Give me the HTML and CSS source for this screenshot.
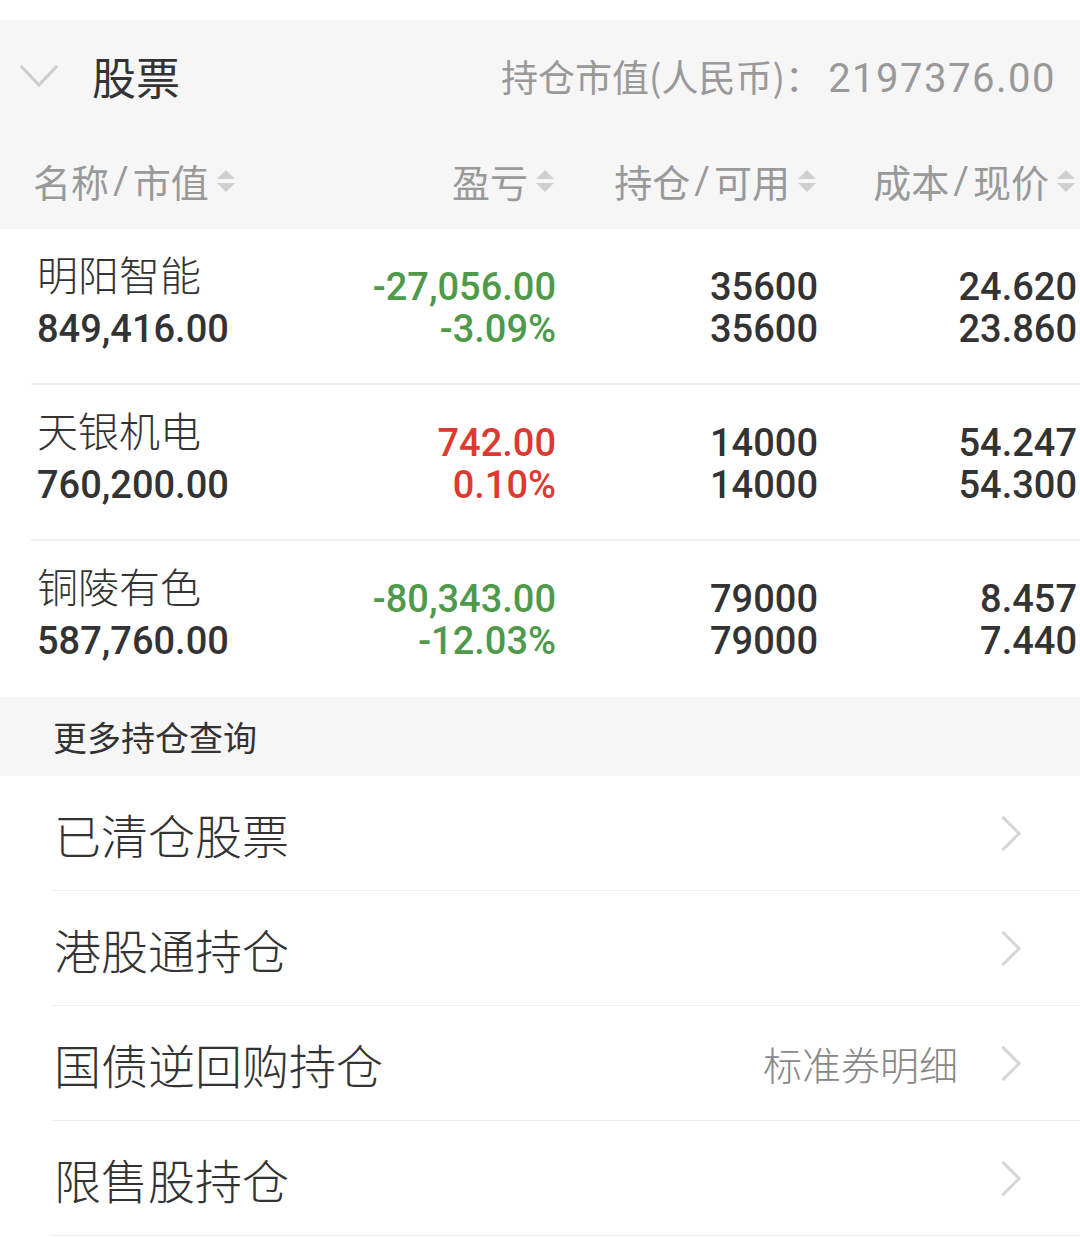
FILE: index.html
```html
<!DOCTYPE html>
<html lang="zh-CN">
<head>
    <meta charset="UTF-8">
    <title>持仓</title>
    <link rel="stylesheet" href="styles.css">
</head>
<body>
<div class="page">
    <div class="stock-head">
        <div class="title-row">
            <svg class="fold" width="40" height="24" viewBox="0 0 40 24">
                <polyline points="2,2 20,21 38,2" fill="none" stroke="#cccccc" stroke-width="3"/>
            </svg>
            <span class="title">股票</span>
            <span class="total">持仓市值(人民币)：<span class="num">2197376.00</span></span>
        </div>
        <div class="cols">
            <div class="col col-name">名称<i>/</i>市值<svg class="sort" width="18" height="24" viewBox="0 0 18 24"><polygon points="0,10 9,1 18,10" fill="#cfcfcf"/><polygon points="0,14 9,23 18,14" fill="#cfcfcf"/></svg></div>
            <div class="col">盈亏<svg class="sort" width="18" height="24" viewBox="0 0 18 24"><polygon points="0,10 9,1 18,10" fill="#cfcfcf"/><polygon points="0,14 9,23 18,14" fill="#cfcfcf"/></svg></div>
            <div class="col">持仓<i>/</i>可用<svg class="sort" width="18" height="24" viewBox="0 0 18 24"><polygon points="0,10 9,1 18,10" fill="#cfcfcf"/><polygon points="0,14 9,23 18,14" fill="#cfcfcf"/></svg></div>
            <div class="col">成本<i>/</i>现价<svg class="sort" width="18" height="24" viewBox="0 0 18 24"><polygon points="0,10 9,1 18,10" fill="#cfcfcf"/><polygon points="0,14 9,23 18,14" fill="#cfcfcf"/></svg></div>
        </div>
    </div>

    <ul class="holdings">
        <li class="row">
            <div class="name-cell">
                <div class="name">明阳智能</div>
                <div class="num">849,416.00</div>
            </div>
            <div class="cell num down">-27,056.00<br>-3.09%</div>
            <div class="cell num">35600<br>35600</div>
            <div class="cell num">24.620<br>23.860</div>
        </li>
        <li class="row">
            <div class="name-cell">
                <div class="name">天银机电</div>
                <div class="num">760,200.00</div>
            </div>
            <div class="cell num up">742.00<br>0.10%</div>
            <div class="cell num">14000<br>14000</div>
            <div class="cell num">54.247<br>54.300</div>
        </li>
        <li class="row">
            <div class="name-cell">
                <div class="name">铜陵有色</div>
                <div class="num">587,760.00</div>
            </div>
            <div class="cell num down">-80,343.00<br>-12.03%</div>
            <div class="cell num">79000<br>79000</div>
            <div class="cell num">8.457<br>7.440</div>
        </li>
    </ul>

    <div class="more-head">更多持仓查询</div>

    <ul class="menu">
        <li class="item"><span class="label">已清仓股票</span><span class="arrow"></span></li>
        <li class="item"><span class="label">港股通持仓</span><span class="arrow"></span></li>
        <li class="item"><span class="label">国债逆回购持仓</span><span class="extra">标准券明细</span><span class="arrow"></span></li>
        <li class="item"><span class="label">限售股持仓</span><span class="arrow"></span></li>
    </ul>
</div>
</body>
</html>
```

FILE: styles.css
```css
*{
    margin: 0;
    padding: 0;
}

body{
    background-color: #ffffff;
    font-family: "Noto Sans CJK SC", sans-serif;
    color: #333333;
}

.page{
    width: 1080px;
    padding-top: 20px;
    overflow: hidden;
}

.num{
    font-family: Roboto, "Noto Sans CJK SC", sans-serif;
}

/* 股票 标题 + 表头 */
.stock-head{
    background-color: #f6f6f6;
}

.title-row{
    height: 112px;
    display: flex;
    align-items: center;
    padding: 0 24px 0 19px;
}

.fold{
    display: block;
    margin-right: 33px;
}

.title{
    font-size: 44px;
    color: #333333;
}

.total{
    margin-left: auto;
    font-size: 37px;
    color: #999999;
}

.total .num{
    font-size: 40px;
    letter-spacing: 1.5px;
    margin-left: 6px;
}

.cols{
    height: 97px;
    display: grid;
    grid-template-columns: 1fr 240px 262px 259px;
    align-items: center;
    padding: 0 5px 0 33px;
    font-size: 38px;
    color: #999999;
}

.col{
    display: flex;
    align-items: center;
    justify-content: flex-end;
}

.col-name{
    justify-content: flex-start;
}

.col i{
    font-style: normal;
    font-family: Roboto, sans-serif;
    margin: 0 4px;
}

.sort{
    display: block;
    margin-left: 8px;
}

/* 持仓列表 */
.holdings{
    list-style: none;
}

.row{
    height: 156px;
    box-sizing: border-box;
    margin-left: 31px;
    padding: 19px 3px 0 6px;
    border-bottom: 2px solid #f1f1f1;
    display: grid;
    grid-template-columns: 1fr 240px 262px 259px;
    align-items: start;
}

.row:last-child{
    border-bottom: none;
}

.name{
    font-size: 41px;
    line-height: 50px;
    font-weight: 300;
}

.name-cell .num{
    font-size: 38px;
    line-height: 42px;
    margin-top: 10px;
    font-weight: 500;
}

.cell{
    text-align: right;
    font-size: 38px;
    line-height: 42px;
    padding-top: 18px;
    font-weight: 500;
}

.down{
    color: #4e9a4a;
}

.up{
    color: #dc3a30;
}

/* 更多持仓查询 */
.more-head{
    height: 79px;
    background-color: #f6f6f6;
    display: flex;
    align-items: center;
    padding-left: 53px;
    font-size: 34px;
}

.menu{
    list-style: none;
}

.item{
    height: 115px;
    box-sizing: border-box;
    margin-left: 52px;
    padding: 0 60px 0 2px;
    border-bottom: 1px solid #eeeeee;
    display: flex;
    align-items: center;
}

.label{
    font-size: 47px;
    font-weight: 300;
}

.extra{
    margin-left: auto;
    font-size: 39px;
    color: #888888;
    font-weight: 300;
}

.arrow{
    width: 22px;
    height: 22px;
    border-top: 3px solid #d6d6d6;
    border-right: 3px solid #d6d6d6;
    transform: rotate(45deg);
    margin-left: auto;
    margin-right: 4px;
}

.extra + .arrow{
    margin-left: 33px;
}
```
